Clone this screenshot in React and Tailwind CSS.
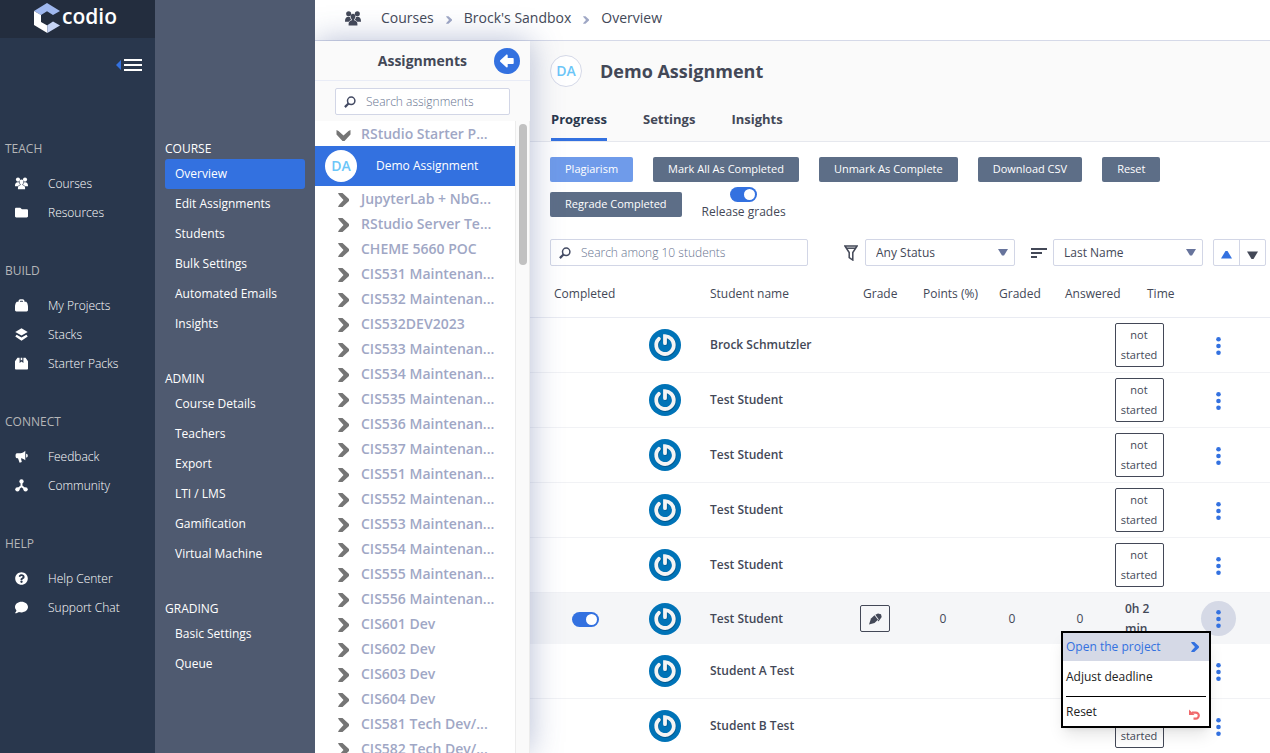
import { useState } from 'react'
import clsx from 'clsx'
import { FaComment, FaFolder, FaQuestionCircle } from 'react-icons/fa'

const mainNav = [
  {
    title: 'TEACH',
    items: [
      { label: 'Courses', icon: PeopleIcon },
      { label: 'Resources', icon: FaFolder },
    ],
  },
  {
    title: 'BUILD',
    items: [
      { label: 'My Projects', icon: BagIcon },
      { label: 'Stacks', icon: StackIcon },
      { label: 'Starter Packs', icon: PackIcon },
    ],
  },
  {
    title: 'CONNECT',
    items: [
      { label: 'Feedback', icon: MegaphoneIcon },
      { label: 'Community', icon: CommunityIcon },
    ],
  },
  {
    title: 'HELP',
    items: [
      { label: 'Help Center', icon: FaQuestionCircle },
      { label: 'Support Chat', icon: FaComment },
    ],
  },
]

const courseNav = [
  {
    title: 'COURSE',
    items: ['Overview', 'Edit Assignments', 'Students', 'Bulk Settings', 'Automated Emails', 'Insights'],
  },
  {
    title: 'ADMIN',
    items: ['Course Details', 'Teachers', 'Export', 'LTI / LMS', 'Gamification', 'Virtual Machine'],
  },
  { title: 'GRADING', items: ['Basic Settings', 'Queue'] },
]

const modules = [
  'JupyterLab + NbG...',
  'RStudio Server Te...',
  'CHEME 5660 POC',
  'CIS531 Maintenan...',
  'CIS532 Maintenan...',
  'CIS532DEV2023',
  'CIS533 Maintenan...',
  'CIS534 Maintenan...',
  'CIS535 Maintenan...',
  'CIS536 Maintenan...',
  'CIS537 Maintenan...',
  'CIS551 Maintenan...',
  'CIS552 Maintenan...',
  'CIS553 Maintenan...',
  'CIS554 Maintenan...',
  'CIS555 Maintenan...',
  'CIS556 Maintenan...',
  'CIS601 Dev',
  'CIS602 Dev',
  'CIS603 Dev',
  'CIS604 Dev',
  'CIS581 Tech Dev/...',
  'CIS582 Tech Dev/...',
]

const students = [
  { id: 1, name: 'Brock Schmutzler', status: 'not started' },
  { id: 2, name: 'Test Student', status: 'not started' },
  { id: 3, name: 'Test Student', status: 'not started' },
  { id: 4, name: 'Test Student', status: 'not started' },
  { id: 5, name: 'Test Student', status: 'not started' },
  { id: 6, name: 'Test Student', completed: true, points: 0, graded: 0, answered: 0, time: '0h 2 min' },
  { id: 7, name: 'Student A Test' },
  { id: 8, name: 'Student B Test', status: 'not started' },
]

function PeopleIcon({ className }) {
  return (
    <svg viewBox="0 0 24 22" fill="currentColor" className={className}>
      <circle cx="5.500" cy="3.800" r="3.800" />
      <circle cx="18.500" cy="3.800" r="3.800" />
      <path d="M0 15c0-4 1.800-6.500 5-6.500 1 0 1.800.2 2.500.7.3 1.500 1 2.800 2 3.700-2 .8-3.200 1.800-3.800 3.100H0z" />
      <path d="M24 15c0-4-1.800-6.500-5-6.500-1 0-1.800.2-2.500.7-.3 1.500-1 2.800-2 3.700 2 .8 3.200 1.800 3.800 3.100H24z" />
      <path d="M12 3.800c2.300 0 3.600 1.600 3.600 3.900 0 2-.8 3.500-1.900 4.400v1.600c3 .8 4.900 2.200 4.900 5.300v2.500H5.400V19c0-3.100 1.900-4.500 4.900-5.300v-1.600c-1.100-.9-1.900-2.400-1.900-4.400 0-2.300 1.300-3.900 3.600-3.900z" />
    </svg>
  )
}

function BagIcon({ className }) {
  return (
    <svg viewBox="0 0 24 24" fill="currentColor" className={className}>
      <path d="M6.500 5V4C6.500 2 8 .5 10 .5h4C16 .5 17.500 2 17.500 4v1H20c2 0 4 5 4 9v6.500c0 1.500-1 2.500-2.500 2.500h-19C1 23 0 22 0 20.500V14c0-4 2-9 4-9zm2.700 0h5.600V4c0-.6-.4-1-1-1h-3.600c-.6 0-1 .4-1 1z" />
    </svg>
  )
}

function StackIcon({ className }) {
  return (
    <svg viewBox="0 0 24 24" fill="currentColor" className={className}>
      <path d="M12 .5 23.500 7.300 12 14 .5 7.300z" />
      <path d="m3 12.500 9 5.200 9-5.200 2.500 3.200L12 23.500.5 15.700z" />
    </svg>
  )
}

function PackIcon({ className }) {
  return (
    <svg viewBox="0 0 24 24" fill="currentColor" className={className}>
      <path d="M4.500 1.500h4V11l3.500-2.500 3.500 2.500V1.500h4L24 8v13.500c0 .8-.7 1.500-1.500 1.500h-21C.7 23 0 22.300 0 21.500V8z" />
      <path d="M10.500 1.500h3v5l-1.500-1-1.500 1z" />
    </svg>
  )
}

function MegaphoneIcon({ className }) {
  return (
    <svg viewBox="0 0 24 24" fill="currentColor" className={className}>
      <path d="M19 1.500v17.500c-2.500-2.500-5-3.700-8-4l1.500 7-4 1.500L5.500 15H3.500C1.800 15 1 13 1 10.500S1.800 6 3.500 6H10c3.500 0 6.500-1.700 9-4.500z" />
      <path d="M20.500 7c2 .3 3 1.500 3 3.500s-1 3.200-3 3.500z" />
    </svg>
  )
}

function CommunityIcon({ className }) {
  return (
    <svg viewBox="0 0 24 24" fill="currentColor" className={className}>
      <circle cx="12" cy="4.500" r="4" />
      <circle cx="4.500" cy="19" r="4" />
      <circle cx="19.500" cy="19" r="4" />
      <path d="M12 4v9.500M12 13l-7 6M12 13l7 6" stroke="currentColor" strokeWidth="3.500" fill="none" />
    </svg>
  )
}

function ChevronIcon({ className }) {
  return (
    <svg viewBox="0 0 11 14" fill="currentColor" className={className}>
      <path d="M0 0h4.500L11 6v2l-6.500 6H0l1-2 4.500-5L1 2z" />
    </svg>
  )
}

function ChevronDownIcon({ className }) {
  return (
    <svg viewBox="0 0 14 11" fill="currentColor" className={className}>
      <path d="M0 0l2 1 5 4.500L12 1l2-1v4.500L8 11H6L0 4.500z" />
    </svg>
  )
}

function BackIcon({ className }) {
  return (
    <svg viewBox="0 0 14 14" fill="currentColor" className={className}>
      <path d="M.3 6.200 6 .9c.7-.6 1.700-.2 1.700.7v2.400h5c.6 0 1 .4 1 1v4c0 .6-.4 1-1 1h-5v2.400c0 .9-1 1.300-1.700.7L.3 7.800c-.4-.4-.4-1.200 0-1.600z" />
    </svg>
  )
}

function SearchIcon({ className }) {
  return (
    <svg viewBox="0 0 12 12" fill="none" stroke="currentColor" className={className}>
      <circle cx="7.200" cy="4.800" r="3.700" strokeWidth="1.500" />
      <path d="M4.500 7.500.9 11.100" strokeWidth="2.200" />
    </svg>
  )
}

function DotsIcon() {
  return (
    <svg viewBox="0 0 5 18" fill="currentColor" className="mt-px h-[18px] w-[5px]">
      <circle cx="2.500" cy="2.300" r="2.300" />
      <circle cx="2.500" cy="9" r="2.300" />
      <circle cx="2.500" cy="15.700" r="2.300" />
    </svg>
  )
}

function Logo() {
  return (
    <svg viewBox="0 0 26 30" className="h-[30px] w-[26px]">
      <path d="M0 8 13 0l13 8-7 4-6-3.700L7 12z" fill="#9fb8ef" />
      <path d="M0 8l7 4v7l6.300 3.500V30L0 22z" fill="#fff" />
      <path d="M13.300 22.300 19 18.500l7 4L13.300 30z" fill="#c6d4f5" />
    </svg>
  )
}

function Avatar() {
  return (
    <svg viewBox="0 0 32 32" className="mx-auto h-8 w-8">
      <circle cx="16" cy="16" r="16" fill="#0073b7" />
      <g fill="none" strokeLinecap="round">
        <path d="M16.600 14.700V8c5 .3 8.600 3.700 8.600 8.600a8.800 8.800 0 1 1-14.600-6.300" stroke="#00588f" strokeWidth="4.200" />
        <path d="M16 14.200V7.200c5 .2 8.800 4 8.800 8.900A8.800 8.800 0 1 1 9.900 9.800" stroke="#f4f4f4" strokeWidth="3.800" />
      </g>
    </svg>
  )
}

function Toggle({ id, label, defaultChecked }) {
  return (
    <span className="relative block h-[15px] w-[27px]">
      <input
        id={id}
        type="checkbox"
        aria-label={label}
        defaultChecked={defaultChecked}
        className="peer block h-[15px] w-[27px] cursor-pointer appearance-none rounded-full bg-slate-300 checked:bg-[#3371e0]"
      />
      <span className="pointer-events-none absolute top-0.5 left-0.5 h-[11px] w-[11px] rounded-full bg-white peer-checked:left-[14px]" />
    </span>
  )
}

function SearchBox({ label, className }) {
  return (
    <label className={clsx('flex h-[27px] items-center gap-2.5 rounded-xs border border-[#d2d6e6] bg-white px-2', className)}>
      <SearchIcon className="h-3 w-3 shrink-0 text-[#434a63]" />
      <input
        type="text"
        aria-label={label}
        placeholder={label}
        className="w-full min-w-0 bg-transparent text-xs font-light outline-none placeholder:text-[#67738f]"
      />
    </label>
  )
}

function Select({ label, options }) {
  return (
    <div className="relative w-[150px]">
      <select
        aria-label={label}
        className="block h-[27px] w-full appearance-none rounded-xs border border-[#d2d6e6] bg-white px-2.5 text-xs outline-none"
      >
        {options.map((o) => (
          <option key={o}>{o}</option>
        ))}
      </select>
      <svg viewBox="0 0 10 7" className="pointer-events-none absolute top-2.5 right-[7px] h-[7px] w-2.5 fill-[#67749c]">
        <path d="M0 0h10L6 6.500H4z" />
      </svg>
    </div>
  )
}

function MainSidebar() {
  return (
    <nav className="w-[155px] shrink-0 bg-[#29374d] text-xs text-white">
      <div className="flex h-[38px] items-center justify-center bg-[#232d3e] pb-0.5 pr-1">
        <Logo />
        <span className="-mt-1 ml-0.5 text-[21px] leading-8 font-semibold">codio</span>
      </div>
      <div className="flex h-[54px] items-center justify-end pr-[13px]">
        <button type="button" aria-label="Collapse menu" className="flex items-center gap-[3px]">
          <svg viewBox="0 0 5 10" className="h-2.5 w-[5px] fill-[#3371e0]">
            <path d="M5 0v10L0 5z" />
          </svg>
          <svg viewBox="0 0 18 12" className="h-3 w-[18px] fill-white">
            <path d="M0 0h18v2H0zM0 5h18v2H0zM0 10h18v2H0z" />
          </svg>
        </button>
      </div>
      <div className="space-y-[34px] pt-[47px]">
        {mainNav.map((group) => (
          <section key={group.title}>
            <h2 className="mb-2.5 pl-[5px] leading-5 text-[#b5b6b8]">{group.title}</h2>
            {group.items.map(({ label, icon: Icon }) => (
              <a key={label} href="#" className="flex h-[29px] items-center gap-5 pl-[15px] font-light">
                <Icon className="h-[13px] w-[13px]" />
                {label}
              </a>
            ))}
          </section>
        ))}
      </div>
    </nav>
  )
}

function CourseSidebar() {
  return (
    <nav className="relative z-20 w-40 shrink-0 space-y-[29px] bg-[#4f5a70] px-2.5 pt-[138px] text-xs font-medium text-white">
      {courseNav.map((group) => (
        <section key={group.title}>
          <h2 className="leading-[21px]">{group.title}</h2>
          {group.items.map((item) => (
            <a
              key={item}
              href="#"
              className={clsx('flex h-[30px] items-center rounded-[3px] px-2.5', item === 'Overview' && 'bg-[#3371e0]')}
            >
              {item}
            </a>
          ))}
        </section>
      ))}
    </nav>
  )
}

function AssignmentsPanel() {
  return (
    <aside className="z-10 flex w-[215px] shrink-0 flex-col bg-white shadow-[0_0_30px_rgba(70,90,150,0.4)]">
      <div className="flex h-10 shrink-0 items-center justify-end gap-[27px] border-b border-[#e9ecf6] bg-[#fafafa] pr-2.5">
        <h2 className="text-sm font-bold">Assignments</h2>
        <button
          type="button"
          aria-label="Hide assignments"
          className="flex h-[26px] w-[26px] items-center justify-center rounded-full bg-[#3371e0] text-white"
        >
          <BackIcon className="h-3.5 w-3.5" />
        </button>
      </div>
      <div className="shrink-0 bg-[#fafafa] px-5 pt-[7px] pb-1.5">
        <SearchBox label="Search assignments" />
      </div>
      <div className="flex min-h-0 grow">
        <ul className="min-w-0 grow overflow-hidden text-sm font-semibold text-[#9fa7c5]">
          <li className="flex h-[25px] items-center gap-2.5 pl-[21px]">
            <ChevronDownIcon className="mt-1 h-[11px] w-[15px] text-[#757575]" />
            RStudio Starter P...
          </li>
          <li className="flex h-10 items-center gap-[19px] bg-[#3371e0] pl-2.5 text-white">
            <span className="flex h-8 w-8 items-center justify-center rounded-full bg-white font-semibold text-[#6cc6f8]">
              DA
            </span>
            <a href="#" className="text-xs font-medium">
              Demo Assignment
            </a>
          </li>
          {modules.map((name) => (
            <li key={name} className="flex h-[25px] items-center gap-3 pl-[23px]">
              <ChevronIcon className="mt-0.5 h-3.5 w-[11px] text-[#757575]" />
              {name}
            </li>
          ))}
        </ul>
        <div className="w-[15px] shrink-0 border-x border-[#ececec] bg-[#fafafa] px-[3px] pt-[3px]">
          <div className="h-[141px] w-2 rounded-full bg-[#c1c1c1]" />
        </div>
      </div>
    </aside>
  )
}

function Toolbar() {
  const button = 'h-[25px] rounded-xs px-[15px] text-[11px] font-medium text-white'
  return (
    <div className="flex flex-wrap items-center gap-x-5 gap-y-[5px] px-5 pt-[15px]">
      <button type="button" className={clsx(button, 'bg-[#6f9bea]')}>
        Plagiarism
      </button>
      {['Mark All As Completed', 'Unmark As Complete', 'Download CSV', 'Reset', 'Regrade Completed'].map((label) => (
        <button key={label} type="button" className={clsx(button, 'bg-[#5d6e87]')}>
          {label}
        </button>
      ))}
      <div className="flex flex-col items-center">
        <Toggle id="release" defaultChecked />
        <label htmlFor="release" className="text-xs leading-5">
          Release grades
        </label>
      </div>
    </div>
  )
}

function Filters() {
  return (
    <div className="flex items-center pt-[17px] pr-1 pl-5">
      <SearchBox label="Search among 10 students" className="w-[258px]" />
      <svg viewBox="0 0 14 16" className="mr-[7px] ml-auto h-4 w-3.5 fill-none stroke-[#434857]" strokeWidth="1.500">
        <path d="M.9 1h12.200L8.800 7.500V15L5.200 12.500v-5z" />
        <path d="M2 3.200h10" />
      </svg>
      <Select label="Status" options={['Any Status', 'Completed', 'Not Started']} />
      <svg viewBox="0 0 16 10" className="mr-1.5 ml-4 h-2.5 w-4 fill-[#434857]">
        <path d="M0 0h16v2H0zM0 4h11v2H0zM0 8h6v2H0z" />
      </svg>
      <Select label="Sort by" options={['Last Name', 'First Name', 'Grade']} />
      <div className="ml-2.5 flex h-[27px] w-[53px] divide-x divide-[#d2d6e6] rounded-xs border border-[#d2d6e6]">
        <button type="button" aria-label="Ascending" className="flex flex-1 items-center justify-center">
          <svg viewBox="0 0 11 8" className="mt-1 h-2 w-[11px] fill-[#3371e0]">
            <path d="M4.500 0h2L11 7.500H0z" />
          </svg>
        </button>
        <button type="button" aria-label="Descending" className="flex flex-1 items-center justify-center">
          <svg viewBox="0 0 11 8" className="mt-1 h-2 w-[11px] fill-[#434857]">
            <path d="M0 .5h11L6.500 8h-2z" />
          </svg>
        </button>
      </div>
    </div>
  )
}

function RowMenu() {
  return (
    <div className="absolute top-[30px] right-[25px] z-30 w-[150px] border-2 border-black bg-white text-left text-xs text-[#222] shadow-lg">
      <button type="button" className="flex h-7 w-full items-center justify-between bg-[#d5d9e6] pr-2.5 pl-[3px] text-[#3371e0]">
        Open the project
        <ChevronIcon className="h-2.5 w-2" />
      </button>
      <button type="button" className="flex h-[31px] w-full items-center pl-[3px]">
        Adjust deadline
      </button>
      <hr className="mx-[3px] mt-1 border-black" />
      <button type="button" className="flex h-[29px] w-full items-center justify-between pr-2 pl-[3px]">
        Reset
        <svg viewBox="0 0 12 11" className="mt-1.5 h-[11px] w-3 fill-none stroke-[#f0696c]" strokeWidth="2.200">
          <path d="M3 3.600h3.800a3 3 0 1 1 0 6H4.500" />
          <path d="M0 .5 5.500 6H0z" fill="#f0696c" stroke="none" />
        </svg>
      </button>
    </div>
  )
}

function StudentRow({ student, menuOpen, onMenu }) {
  const started = student.time !== undefined
  return (
    <tr className={clsx(started ? 'h-[51px] bg-[#f5f6f8]' : 'h-[55px] [&>td]:border-b [&>td]:border-[#f1f2f5]')}>
      <td>
        {started && (
          <div className="flex justify-center pt-0.5">
            <Toggle id="completed" label="Completed" defaultChecked={student.completed} />
          </div>
        )}
      </td>
      <td>
        <Avatar />
      </td>
      <td className="pl-5 font-semibold">{student.name}</td>
      <td>
        {started && (
          <button
            type="button"
            aria-label="Edit grade"
            className="mx-auto flex h-[27px] w-[30px] items-center justify-center rounded-xs border border-[#434857]"
          >
            <svg viewBox="0 0 13 12" className="h-3 w-[13px] fill-[#434857]">
              <path d="M0 11.500 2 5.500 5.500 2.300 9 6.700 5.500 10z" />
              <path d="M6.300 1.700 9 .5l3 .8.700 2.700-3 4.200-1-.3 1-1.700z" />
            </svg>
          </button>
        )}
      </td>
      <td className="text-center">{student.points}</td>
      <td className="text-center">{student.graded}</td>
      <td className="text-center">{student.answered}</td>
      <td>
        {started && <p className="w-11 pl-3.5 leading-5 font-semibold">{student.time}</p>}
        {student.status && (
          <p className="mx-auto w-[49px] rounded-xs border border-[#434857] bg-white py-px text-center text-[11px] leading-5">
            {student.status}
          </p>
        )}
      </td>
      <td>
        <div className="relative mx-auto w-[35px]">
          <button
            type="button"
            aria-label="Student actions"
            onClick={onMenu}
            className={clsx(
              'flex h-[35px] w-[35px] items-center justify-center rounded-full text-[#3371e0]',
              menuOpen && 'bg-[#d5d9e6]',
            )}
          >
            <DotsIcon />
          </button>
          {menuOpen && <RowMenu />}
        </div>
      </td>
    </tr>
  )
}

function StudentTable() {
  const [openId, setOpenId] = useState(6)

  return (
    <table className="mt-1 w-full table-fixed border-separate border-spacing-0 text-xs">
      <thead>
        <tr className="h-12 text-left whitespace-nowrap [&>th]:border-b [&>th]:border-[#e9ebf2] [&>th]:font-normal">
          <th className="w-[110px] pl-6">Completed</th>
          <th className="w-[50px]" />
          <th className="pl-5">Student name</th>
          <th className="w-[72px] pl-6">Grade</th>
          <th className="w-16 pl-3">Points (%)</th>
          <th className="w-[74px] pl-6">Graded</th>
          <th className="w-[62px] pl-4">Answered</th>
          <th className="w-[56px] pl-9">Time</th>
          <th className="w-[103px]" />
        </tr>
      </thead>
      <tbody>
        {students.map((s) => (
          <StudentRow
            key={s.id}
            student={s}
            menuOpen={openId === s.id}
            onMenu={() => setOpenId(openId === s.id ? null : s.id)}
          />
        ))}
      </tbody>
    </table>
  )
}

export default function App() {
  return (
    <div className="flex h-screen overflow-hidden bg-white font-['Open_Sans',sans-serif] text-[#434857]">
      <MainSidebar />
      <CourseSidebar />
      <div className="flex min-w-0 grow flex-col">
        <header className="flex h-[41px] shrink-0 items-center border-b border-[#d5d9e8] pb-1 pl-[30px] text-sm">
          <PeopleIcon className="mr-5 h-[15px] w-4" />
          <a href="#">Courses</a>
          <ChevronIcon className="mx-3 mt-1 h-2 w-1.5 text-[#9fa7c5]" />
          <a href="#">Brock's Sandbox</a>
          <ChevronIcon className="mx-3 mt-1 h-2 w-1.5 text-[#9fa7c5]" />
          <a href="#">Overview</a>
        </header>
        <div className="flex min-h-0 grow">
          <AssignmentsPanel />
          <main className="min-w-0 grow overflow-hidden">
            <div className="border-b border-[#e6e8ee] bg-[#fafafa]">
              <div className="flex items-center gap-[18px] px-5 pt-3.5">
                <span className="flex h-8 w-8 items-center justify-center rounded-full border border-[#d5d9e8] bg-white text-sm font-semibold text-[#6cc6f8]">
                  DA
                </span>
                <h1 className="text-lg leading-8 font-bold">Demo Assignment</h1>
              </div>
              <div className="mt-[22px] flex gap-9 pl-[21px] text-[13px] leading-5 font-bold">
                <a href="#" className="border-b-3 border-[#3371e0] pb-[9px] text-[#29374d]">
                  Progress
                </a>
                <a href="#">Settings</a>
                <a href="#">Insights</a>
              </div>
            </div>
            <Toolbar />
            <Filters />
            <StudentTable />
          </main>
        </div>
      </div>
    </div>
  )
}
